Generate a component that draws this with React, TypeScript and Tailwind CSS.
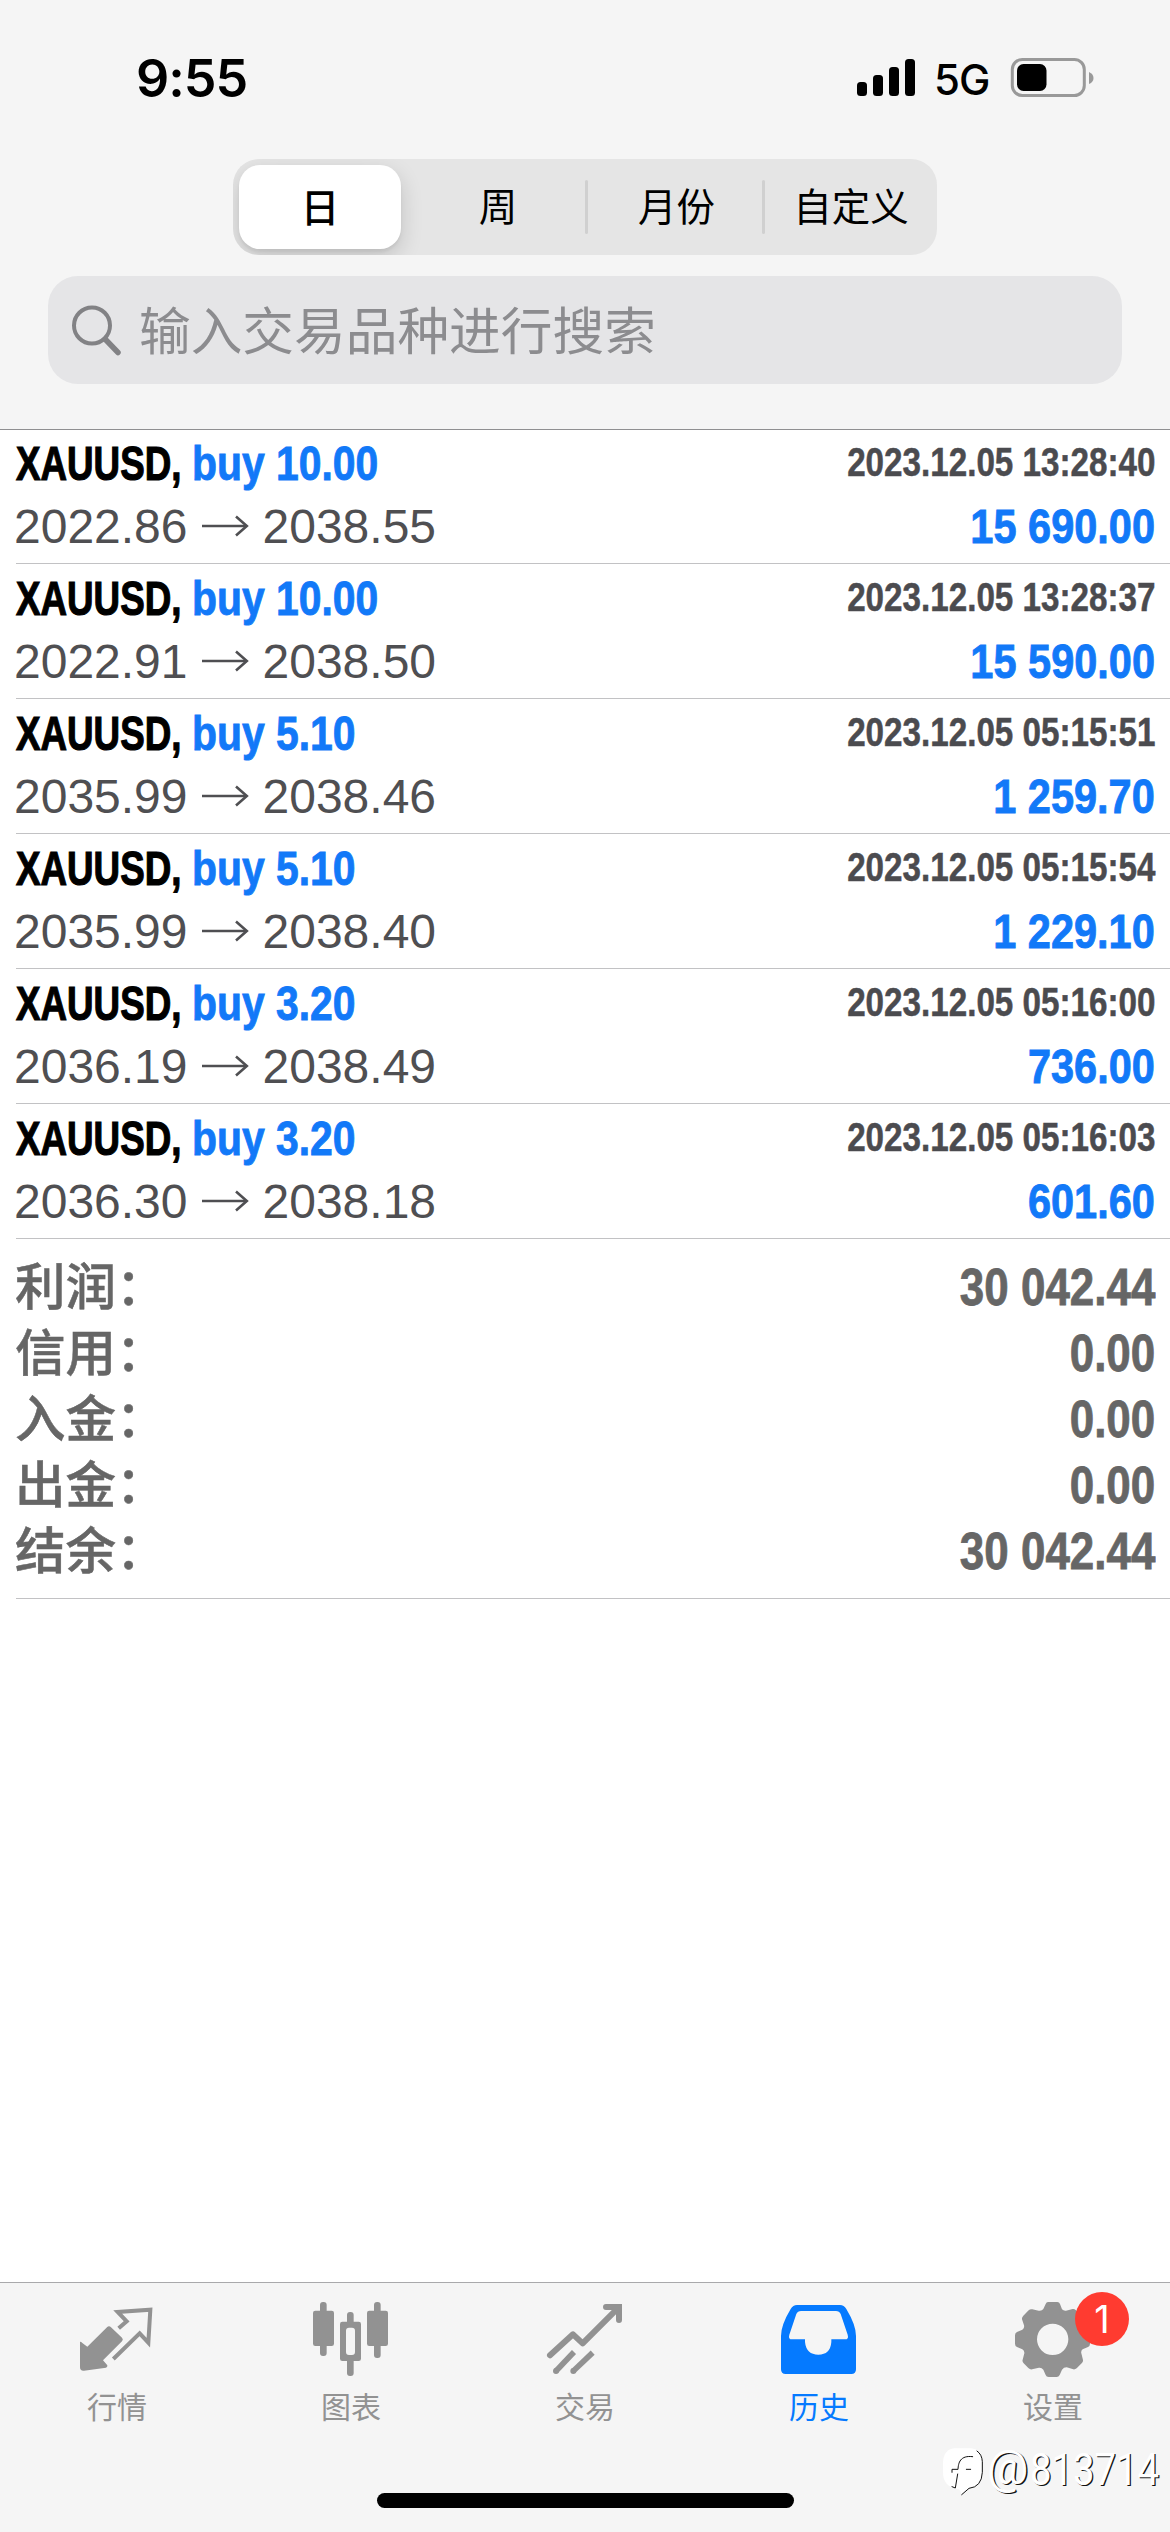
import type { ReactNode } from "react";

const trades = [
  { volume: "10.00", time: "2023.12.05 13:28:40", open: "2022.86", close: "2038.55", profit: "15 690.00" },
  { volume: "10.00", time: "2023.12.05 13:28:37", open: "2022.91", close: "2038.50", profit: "15 590.00" },
  { volume: "5.10", time: "2023.12.05 05:15:51", open: "2035.99", close: "2038.46", profit: "1 259.70" },
  { volume: "5.10", time: "2023.12.05 05:15:54", open: "2035.99", close: "2038.40", profit: "1 229.10" },
  { volume: "3.20", time: "2023.12.05 05:16:00", open: "2036.19", close: "2038.49", profit: "736.00" },
  { volume: "3.20", time: "2023.12.05 05:16:03", open: "2036.30", close: "2038.18", profit: "601.60" },
];

const totals = [
  ["利润", "30 042.44"],
  ["信用", "0.00"],
  ["入金", "0.00"],
  ["出金", "0.00"],
  ["结余", "30 042.44"],
];

function StatusBar() {
  return (
    <div className="flex h-[159px] items-start justify-between pr-[76px] pl-[136px] font-['Inter',sans-serif] text-black">
      <div className="pt-[49px] text-[52px] leading-[60px] font-semibold tracking-[-1px]">9:55</div>
      <div className="flex pt-[57px]">
        <svg className="h-[42px] w-[60px]" viewBox="0 0 60 42">
          <rect x="0" y="25" width="10" height="14" rx="3.5" />
          <rect x="16" y="18" width="10" height="21" rx="3.5" />
          <rect x="32" y="10" width="10" height="29" rx="3.5" />
          <rect x="48" y="2" width="10" height="37" rx="3.5" />
        </svg>
        <div className="ml-[17px] h-[42px] w-[56px] text-[42px] leading-[46px] font-medium tracking-[-1px]">5G</div>
        <svg className="ml-[20px] h-[42px] w-[84px]" viewBox="0 0 84 42">
          <rect x="2.3" y="2.5" width="72" height="36" rx="10" fill="none" stroke="#999" strokeWidth="3" />
          <path d="M79 15 Q83.5 17 83.5 21 Q83.5 25 79 27 Z" fill="#999" />
          <rect x="7" y="7" width="29.5" height="27" rx="6.5" />
        </svg>
      </div>
    </div>
  );
}

function PeriodPicker() {
  return (
    <div className="mx-auto flex h-[96px] w-[704px] overflow-hidden rounded-[26px] bg-[#e5e5e5] text-[38.5px] leading-[91px] font-medium text-black">
      <div className="m-[6px] mr-0 h-[84px] w-[162px] rounded-[21px] bg-white text-center leading-[80px] shadow-[0_8px_22px_rgba(0,0,0,0.16),0_3px_3px_rgba(0,0,0,0.05)]">
        日
      </div>
      <div className="ml-[10px] w-[174px] text-center font-normal">周</div>
      <div className="mt-[21px] h-[54px] w-[3px] rounded bg-[#d0d0d0]" />
      <div className="w-[174px] pl-[3px] text-center font-normal">月份</div>
      <div className="mt-[21px] h-[54px] w-[3px] rounded bg-[#d0d0d0]" />
      <div className="flex-1 text-center font-normal">自定义</div>
    </div>
  );
}

function SearchField() {
  return (
    <div className="mx-[48px] mt-[21px] flex h-[108px] items-center rounded-[30px] bg-[#e5e5e7] pl-[22px]">
      <svg className="h-[54px] w-[54px]" viewBox="70 303 54 54" fill="none" stroke="#828285" strokeLinecap="round">
        <circle cx="92" cy="325.5" r="18" strokeWidth="4" />
        <path d="M105.5 339.5 L118 352.5" strokeWidth="5.5" />
      </svg>
      <span className="ml-[15px] pb-[5px] text-[51.7px] leading-[60px] text-[#8c8c8f]">输入交易品种进行搜索</span>
    </div>
  );
}

function TradeRow({ trade }: { trade: (typeof trades)[number] }) {
  return (
    <li className="ml-[16px] h-[135px] border-b border-[#c2c2c4] pt-[2px] pr-[15px] font-['Liberation_Sans',Arial,sans-serif] text-[49px] leading-[64px] whitespace-nowrap">
      <div className="flex h-[63px] justify-between font-bold">
        <div className="flex">
          <div className="w-[176px] origin-left scale-x-[0.75] text-black [-webkit-text-stroke:1.2px_currentColor]">XAUUSD,</div>
          <div className="origin-left scale-x-[0.834] text-[#1279f8] [-webkit-text-stroke:0.9px_currentColor]">
            buy {trade.volume}
          </div>
        </div>
        <div className="origin-right scale-x-[0.83] text-[40px] leading-[63px] text-[#4b4b4f] [-webkit-text-stroke:0.5px_currentColor]">
          {trade.time}
        </div>
      </div>
      <div className="flex h-[63px] justify-between">
        <div className="flex items-center text-[48px] leading-[65px] text-[#4f4f52]">
          <span className="-ml-[2px] pt-[2px]">{trade.open}</span>
          <svg className="mt-[2px] ml-[14px] h-[24px] w-[47px]" viewBox="0 0 47 24" fill="none" stroke="currentColor" strokeWidth="2.6">
            <path d="M0 11 H44.5" />
            <path d="M34 1.5 L44.8 11 L34 20.5" />
          </svg>
          <span className="ml-[14px] pt-[2px]">{trade.close}</span>
        </div>
        <div className="origin-right scale-x-[0.847] font-bold text-[#1279f8] [-webkit-text-stroke:0.9px_currentColor]">{trade.profit}</div>
      </div>
    </li>
  );
}

function Totals() {
  return (
    <section className="ml-[16px] border-b border-[#c2c2c4] pt-[15px] pr-[15px] pb-[14px] text-[#666]">
      {totals.map(([label, value]) => (
        <div key={label} className="flex h-[66px] justify-between">
          <span className="-ml-px text-[50.5px] leading-[59px] font-medium [-webkit-text-stroke:0.5px_currentColor]">{label}：</span>
          <div className="origin-right scale-x-[0.845] font-['Liberation_Sans',Arial,sans-serif] text-[52px] leading-[66px] font-bold [-webkit-text-stroke:0.8px_currentColor]">
            {value}
          </div>
        </div>
      ))}
    </section>
  );
}

function Tab({ label, viewBox, active, badge, children }: { label: string; viewBox: string; active?: boolean; badge?: string; children: ReactNode }) {
  return (
    <div className={active ? "relative flex w-[234px] flex-col items-center text-[#057aff]" : "relative flex w-[234px] flex-col items-center text-[#929292]"}>
      <svg className="h-[84px] w-[96px]" viewBox={viewBox} fill="currentColor">
        {children}
      </svg>
      <span className="mt-[8px] text-[30px] leading-[32px]">{label}</span>
      {badge && (
        <span className="absolute -top-[5px] left-[139px] h-[54px] w-[54px] rounded-full bg-[#ff3b30] text-center font-['Inter',sans-serif] text-[38px] leading-[54px] text-white">
          {badge}
        </span>
      )}
    </div>
  );
}

function TabBar() {
  return (
    <nav className="h-[250px] border-t border-[#a9a9ab] bg-[#f5f5f5] pt-[14px]">
      <div className="flex">
        <Tab label="行情" viewBox="207 81 288 252">
          <path d="M240 216 Q243 214 246 218 L262 230 L321 172 Q327 166 333 172 L366 203 Q371 208 366 214 L309 271 L322 286 Q323 292 318 293 L252 302 Q240 303 240 292 Z" />
          <path
            d="M356 175 L380 154 L353 126 L451 119 L445 218 L419 190 L340 267"
            fill="none"
            stroke="currentColor"
            strokeWidth="12"
          />
        </Tab>
        <Tab label="图表" viewBox="909 81 288 252">
          <rect x="960" y="96" width="20" height="162" rx="9" />
          <rect x="939" y="122" width="63" height="106" rx="7" />
          <rect x="1122" y="96" width="20" height="168" rx="9" />
          <rect x="1101" y="122" width="63" height="106" rx="7" />
          <rect x="1041" y="126" width="20" height="40" rx="9" />
          <rect x="1041" y="262" width="20" height="56" rx="9" />
          <path fillRule="evenodd" d="M1027 155 H1076 Q1083 155 1083 162 V266 Q1083 273 1076 273 H1027 Q1020 273 1020 266 V162 Q1020 155 1027 155 Z M1047 173 Q1038 173 1038 182 V246 Q1038 255 1047 255 H1056 Q1065 255 1065 246 V182 Q1065 173 1056 173 Z" />
        </Tab>
        <Tab label="交易" viewBox="411 81 288 252">
          <g fill="none" stroke="currentColor" strokeWidth="18" strokeLinecap="round">
            <path d="M450 256 L519 193 L548 220 L650 118" strokeLinejoin="round" />
            <path d="M618 111 H657 V150" />
          </g>
          <g stroke="currentColor" strokeWidth="17">
            <path d="M468 303 L522 246" />
            <path d="M520 303 L578 248" />
          </g>
          <circle cx="468" cy="303" r="9" />
          <circle cx="520" cy="303" r="9" />
        </Tab>
        <Tab label="历史" viewBox="3 81 288 252" active>
          <path
            fillRule="evenodd"
            d="M81 105 H210 Q222 105 229 117 Q258 165 258 198 V298 Q258 312 244 312 H47 Q33 312 33 298 V198 Q33 165 62 117 Q69 105 81 105 Z M93 123 Q83 123 79 132 L58 194 Q54 208 66 208 H105 V216 Q109 254 145 254 Q181 254 184 216 V208 H225 Q237 208 233 194 L212 132 Q208 123 198 123 Z"
          />
        </Tab>
        <Tab label="设置" viewBox="705 81 288 252" badge="1">
          <path
            fillRule="evenodd"
            d="M834 96 H862 Q868 96 870 102 L876 118 Q881 123 888 122 L908 117 Q913 116 918 121 L934 137 Q940 143 938 149 L933 166 Q932 174 937 178 L954 186 Q960 188 960 196 V221 Q960 228 954 231 L938 238 Q932 243 934 250 L939 270 Q940 275 935 280 L920 295 Q915 299 910 298 L890 292 Q881 292 876 299 L869 315 Q866 321 860 321 H836 Q829 321 827 315 L820 299 Q815 292 807 293 L786 298 Q780 299 775 294 L761 280 Q756 275 758 269 L763 250 Q764 243 757 238 L741 231 Q735 228 735 221 V196 Q735 189 741 186 L757 179 Q764 174 762 166 L756 148 Q755 142 760 137 L776 121 Q781 116 787 118 L806 122 Q815 124 820 117 L827 102 Q829 96 834 96 Z M848 161 A47 47 0 1 0 848 255 A47 47 0 1 0 848 161 Z"
          />
        </Tab>
      </div>
      <div className="mx-auto mt-[72px] h-[15px] w-[417px] rounded-full bg-black" />
    </nav>
  );
}

function Watermark() {
  return (
    <div className="absolute top-[2445px] right-[11px] flex font-['Roboto',sans-serif] leading-[50px] text-white [text-shadow:1.5px_1px_0_#111]">
      <svg className="h-[54px] w-[44px]" viewBox="22 30 132 162" fill="none" strokeLinecap="round" strokeWidth="3">
        <path
          d="M62 40 H112 Q146 44 146 78 V116 Q144 156 108 160 Q98 164 84 179 Q82 168 76 163 Q28 158 28 112 V82 Q30 44 62 40 Z"
          fill="#fff"
        />
        <g stroke="#111">
          <path d="M130 48 Q145 58 146 80 V112 Q144 156 106 160 L84 179" />
          <path d="M55 112 V103 H73 C74 84 79 60 117 65" />
          <path d="M98 103 H111" />
          <path d="M72 117 L65 159 L55 155" />
        </g>
      </svg>
      <span className="ml-[2px] w-[43px] text-[46px] leading-[46px]">@</span>
      <span className="w-[129px] origin-left scale-x-[0.85] text-[45px]">813714</span>
    </div>
  );
}

export default function App() {
  return (
    <div className="relative flex h-[2532px] w-[1170px] flex-col overflow-hidden bg-white font-['Noto_Sans_CJK_SC',sans-serif]">
      <header className="h-[430px] shrink-0 border-b border-[#8f8f91] bg-[#f5f5f5]">
        <StatusBar />
        <PeriodPicker />
        <SearchField />
      </header>
      <main className="flex-1">
        <ul className="-mt-px">
          {trades.map((trade) => (
            <TradeRow key={trade.time} trade={trade} />
          ))}
        </ul>
        <Totals />
      </main>
      <TabBar />
      <Watermark />
    </div>
  );
}
